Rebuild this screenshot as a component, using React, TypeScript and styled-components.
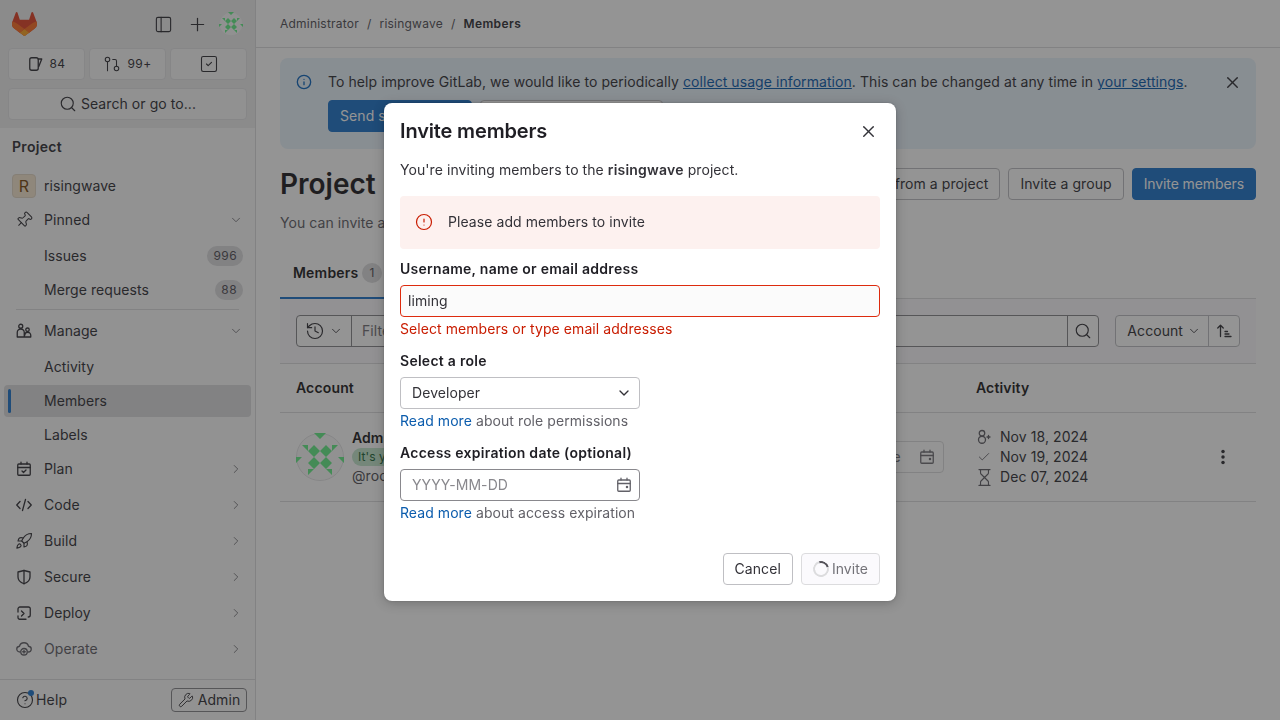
import React from 'react';
import styled, { createGlobalStyle } from 'styled-components';
import {
  Check,
  ChevronDown,
  ChevronRight,
  CircleAlert,
  CircleHelp,
  GitPullRequest,
  History,
  Hourglass,
  Info,
  PanelLeft,
  Pin,
  Plus,
  Rocket,
  Search,
  SquareCheck,
  Wrench,
  X,
} from 'lucide-react';

const GlobalStyle = createGlobalStyle`
  html, body {
    margin: 0;
    padding: 0;
    height: 100%;
    overflow: hidden;
    background: #fff;
  }
  body {
    font-family: Inter, "Noto Sans", "Liberation Sans", sans-serif;
    font-size: 14px;
    line-height: 20px;
    letter-spacing: 0.07px;
    color: #333238;
  }
  * {
    box-sizing: border-box;
  }
`;

const Page = styled.div`
  display: grid;
  grid-template-columns: 256px 1fr;
  width: 1280px;
  height: 720px;
  overflow: hidden;
`;

/* ---------- sidebar ---------- */

const Sidebar = styled.aside`
  display: flex;
  flex-direction: column;
  height: 720px;
  background: #fbfbfb;
  border-right: 1px solid #dcdcde;
`;

const SidebarTop = styled.div`
  height: 128px;
  flex-shrink: 0;
  padding: 0 8px;
  background: #eeeeee;
`;

const TopRow = styled.div`
  display: flex;
  align-items: center;
  height: 48px;
  padding-left: 4px;
  color: #333238;
`;

const TopIcons = styled.div`
  display: flex;
  align-items: center;
  margin-left: auto;
  padding-right: 4px;
`;

const TopIconButton = styled.span`
  display: flex;
  align-items: center;
  justify-content: center;
  width: 34px;
`;

const TopAvatar = styled.span`
  display: flex;
  margin-left: 5px;
`;

const CountRow = styled.div`
  display: grid;
  grid-template-columns: repeat(3, 77px);
  gap: 4px;
`;

const CountButton = styled.div`
  display: flex;
  align-items: center;
  justify-content: center;
  gap: 6px;
  height: 32px;
  font-size: 12px;
  letter-spacing: 0.4px;
  background: #f9f9f9;
  border: 1px solid #e4e4e6;
  border-radius: 4px;
`;

const SearchButton = styled.div`
  display: flex;
  align-items: center;
  justify-content: center;
  gap: 4px;
  height: 32px;
  margin-top: 8px;
  width: 239px;
  background: #f9f9f9;
  border: 1px solid #e4e4e6;
  border-radius: 4px;
`;

const SidebarHeading = styled.div`
  flex-shrink: 0;
  padding: 9px 12px 0;
  height: 42px;
  font-weight: 600;
  letter-spacing: 0.3px;
`;

const Nav = styled.nav`
  flex: 1;
  min-height: 0;
  overflow: hidden;
  padding: 0 4px;
`;

const NavRow = styled.div<{ $active?: boolean; $muted?: boolean; $gap?: number }>`
  position: relative;
  display: flex;
  align-items: center;
  height: 32px;
  margin-top: ${p => p.$gap ?? 2}px;
  padding: 0 8px 0 12px;
  border-radius: 4px;
  background: ${p => (p.$active ? '#dcdcde' : 'transparent')};
  color: ${p => (p.$muted ? '#626168' : '#333238')};

  ${p =>
    p.$active &&
    `&::before {
      content: '';
      position: absolute;
      left: 4px;
      top: 4px;
      bottom: 4px;
      width: 3px;
      border-radius: 2px;
      background: #1f75cb;
    }`}
`;

const NavIconSlot = styled.span`
  display: flex;
  align-items: center;
  justify-content: center;
  width: 16px;
  height: 16px;
  margin-right: 12px;
  flex-shrink: 0;

  svg {
    flex-shrink: 0;
  }
`;

const NavCaret = styled.span`
  display: flex;
  margin-left: auto;
  color: #737278;
`;

const NavBadge = styled.span`
  margin-left: auto;
  margin-right: 0;
  padding: 0 6px;
  height: 20px;
  line-height: 20px;
  font-size: 12px;
  letter-spacing: 0.4px;
  border-radius: 10px;
  background: #dcdcde;
  color: #535158;
`;

const ProjectAvatar = styled.span`
  display: flex;
  align-items: center;
  justify-content: center;
  width: 24px;
  height: 24px;
  margin-left: -4px;
  margin-right: 8px;
  font-size: 16px;
  color: #7a4a12;
  background: #f5e6d0;
  border: 1px solid #e3d6c5;
  border-radius: 4px;
`;

const NavDivider = styled.div`
  height: 1px;
  margin: 3px 12px 5px 12px;
  background: #dcdcde;
`;

const SidebarFooter = styled.div`
  display: flex;
  align-items: center;
  justify-content: space-between;
  flex-shrink: 0;
  height: 41px;
  padding: 0 8px 0 16px;
  border-top: 1px solid #dcdcde;
`;

const HelpLink = styled.span`
  position: relative;
  display: flex;
  align-items: center;
  gap: 2px;
  letter-spacing: 0.2px;
`;

const HelpDot = styled.span`
  position: absolute;
  left: 12px;
  top: 0;
  width: 6px;
  height: 6px;
  border-radius: 50%;
  background: #1f75cb;
`;

const AdminButton = styled.span`
  display: flex;
  align-items: center;
  justify-content: center;
  gap: 4px;
  width: 76px;
  height: 24px;
  border: 1px solid #89888d;
  border-radius: 4px;
`;

/* ---------- main ---------- */

const Main = styled.main`
  min-width: 0;
  height: 720px;
  overflow: hidden;
`;

const Breadcrumbs = styled.div`
  display: flex;
  align-items: center;
  gap: 8px;
  height: 48px;
  padding: 0 24px;
  font-size: 12px;
  letter-spacing: 0.22px;
  color: #535158;
  border-bottom: 1px solid #dcdcde;
`;

const CrumbCurrent = styled.span`
  font-weight: 600;
  letter-spacing: 0.4px;
  color: #333238;
`;

const Content = styled.div`
  padding: 10px 24px 0;
`;

const Banner = styled.div`
  display: flex;
  height: 91px;
  padding: 14px 16px;
  background: #e9f3fc;
  border-radius: 8px;
`;

const BannerIcon = styled.span`
  display: flex;
  width: 32px;
  padding-top: 2px;
  flex-shrink: 0;
  color: #1068bf;
`;

const BannerBody = styled.div`
  flex: 1;
`;

const BannerText = styled.div`
  height: 28px;
`;

const BannerClose = styled.span`
  display: flex;
  margin: 2px 0 0 auto;
  color: #333238;
`;

const CloseIcon = styled(X)`
  margin: -1.5px;
`;

const TextLink = styled.a<{ $underline?: boolean }>`
  color: #0b5cad;
  text-decoration: ${p => (p.$underline ? 'underline' : 'none')};
`;

const BannerActions = styled.div`
  display: flex;
  gap: 8px;
`;

const Button = styled.span<{ $primary?: boolean; $disabled?: boolean }>`
  display: inline-flex;
  align-items: center;
  justify-content: center;
  gap: 4px;
  height: 32px;
  padding: 0 11px;
  white-space: nowrap;
  border-radius: 4px;
  border: 1px solid ${p => (p.$primary ? '#1f75cb' : p.$disabled ? '#dcdcde' : '#bfbfc3')};
  background: ${p => (p.$primary ? '#1f75cb' : p.$disabled ? '#fbfafd' : '#fff')};
  color: ${p => (p.$primary ? '#fff' : p.$disabled ? '#737278' : '#333238')};
`;

const InviteButton = styled(Button)`
  letter-spacing: -0.1px;
`;

const TitleRow = styled.div`
  display: flex;
  align-items: center;
  justify-content: space-between;
  margin-top: 19px;
  height: 32px;
`;

const PageTitle = styled.h1`
  margin: 0;
  font-size: 28px;
  line-height: 32px;
  font-weight: 600;
  letter-spacing: 0;
  color: #1f1e24;
`;

const TitleActions = styled.div`
  display: flex;
  gap: 8px;
`;

const PageIntro = styled.p`
  margin: 13px 0 0;
  color: #626168;
`;

const Tabs = styled.div`
  display: flex;
  margin-top: 16px;
  height: 50px;
  border-bottom: 1px solid #dcdcde;
`;

const Tab = styled.div`
  display: flex;
  align-items: center;
  gap: 4px;
  height: 50px;
  padding: 0 13px;
  font-weight: 600;
  letter-spacing: 0.2px;
  color: #1f1e24;
  border-bottom: 2px solid #1f75cb;
`;

const TabCount = styled.span`
  padding: 0 7px;
  height: 20px;
  font-size: 12px;
  line-height: 20px;
  font-weight: 400;
  border-radius: 10px;
  background: #dcdcde;
  color: #535158;
`;

const FilterBar = styled.div`
  display: flex;
  align-items: center;
  height: 65px;
  padding: 0 16px;
  background: #fbfafd;
  border-bottom: 1px solid #dcdcde;
`;

const FilterGroup = styled.div`
  display: flex;
  flex: 1;
  height: 32px;
  margin-right: 16px;
  background: #fff;
  border: 1px solid #89888d;
  border-radius: 4px;
`;

const HistoryToggle = styled.span`
  display: flex;
  align-items: center;
  justify-content: center;
  gap: 4px;
  width: 55px;
  border-right: 1px solid #89888d;
`;

const FilterInput = styled.span`
  flex: 1;
  padding: 5px 10px;
  color: #737278;
`;

const FilterSubmit = styled.span`
  display: flex;
  align-items: center;
  justify-content: center;
  width: 31px;
  border-left: 1px solid #89888d;
`;

const SortGroup = styled.div`
  display: flex;
  height: 32px;
  border: 1px solid #bfbfc3;
  border-radius: 4px;
  background: #fff;
`;

const SortLabel = styled.span`
  display: flex;
  align-items: center;
  gap: 4px;
  padding: 0 7px 0 11px;
`;

const SortDirection = styled.span`
  display: flex;
  align-items: center;
  justify-content: center;
  width: 31px;
  border-left: 1px solid #bfbfc3;
`;

const TABLE_COLUMNS = '160px 180px 152px 188px 230px 1fr';

const TableHead = styled.div`
  display: grid;
  grid-template-columns: ${TABLE_COLUMNS};
  align-items: center;
  height: 49px;
  font-weight: 600;
  letter-spacing: 0.15px;
  color: #1f1e24;
  border-bottom: 1px solid #dcdcde;
`;

const HeadCell = styled.div`
  padding: 0 16px;
`;

const TableRow = styled.div`
  display: grid;
  grid-template-columns: ${TABLE_COLUMNS};
  align-items: center;
  height: 89px;
  border-bottom: 1px solid #dcdcde;
`;

const AccountCell = styled.div`
  display: flex;
  align-items: center;
  gap: 8px;
  padding-left: 16px;
  white-space: nowrap;
`;

const AccountName = styled.div`
  font-weight: 600;
  color: #1f1e24;
`;

const YouBadge = styled.span`
  display: block;
  width: max-content;
  height: 18px;
  padding: 0 6px;
  font-size: 12px;
  line-height: 18px;
  border-radius: 9px;
  background: #c3e6cd;
  color: #24663b;
`;

const AccountHandle = styled.div`
  color: #535158;
`;

const ExpirationCell = styled.div`
  padding: 0 16px;
`;

const DateStub = styled.div`
  display: flex;
  align-items: center;
  justify-content: space-between;
  height: 32px;
  padding: 0 8px 0 12px;
  color: #737278;
  border: 1px solid #dcdcde;
  border-radius: 4px;
`;

const ActivityCell = styled.div`
  padding: 0 16px;
`;

const ActivityLine = styled.div`
  display: flex;
  align-items: center;
  gap: 8px;
  height: 20px;
`;

const ActivityIcon = styled.span`
  display: flex;
  justify-content: center;
  width: 16px;
  color: #626168;

  svg {
    flex-shrink: 0;
  }
`;

const KebabCell = styled.div`
  display: flex;
  justify-content: center;
  color: #333238;
`;

/* ---------- modal ---------- */

const Backdrop = styled.div`
  position: fixed;
  inset: 0;
  display: flex;
  justify-content: center;
  align-items: flex-start;
  padding-top: 103px;
  background: rgba(31, 31, 31, 0.478);
`;

const Modal = styled.div`
  width: 512px;
  height: 498px;
  background: #fff;
  border-radius: 8px;
  box-shadow: 0 0 2px rgba(5, 5, 6, 0.2), 0 2px 12px rgba(5, 5, 6, 0.24);
`;

const ModalHeader = styled.div`
  display: flex;
  align-items: center;
  justify-content: space-between;
  height: 56px;
  padding: 0 20px 0 16px;
`;

const ModalTitle = styled.h2`
  margin: 0;
  font-size: 20px;
  line-height: 24px;
  font-weight: 600;
  letter-spacing: -0.15px;
  color: #1f1e24;
`;

const ModalBody = styled.div`
  padding: 0 16px;

  strong {
    font-weight: 600;
    letter-spacing: 0.2px;
  }
`;

const ModalIntro = styled.p`
  margin: 0;
  padding-top: 1px;
  height: 37px;
`;

const ErrorAlert = styled.div`
  display: flex;
  align-items: center;
  gap: 16px;
  height: 53px;
  margin-bottom: 10px;
  padding: 0 16px 1px;
  background: #fdf1ef;
  border-radius: 4px;
  color: #333238;
`;

const ErrorAlertIcon = styled.span`
  display: flex;
  margin: -1px;
  color: #c91c00;
`;

const FieldLabel = styled.label`
  display: block;
  height: 20px;
  margin-bottom: 6px;
  font-weight: 600;
  letter-spacing: 0.27px;
  color: #1f1e24;
`;

const TextField = styled.div<{ $invalid?: boolean; $narrow?: boolean }>`
  display: flex;
  align-items: center;
  justify-content: space-between;
  height: 32px;
  width: ${p => (p.$narrow ? '240px' : '100%')};
  padding: 0 7px;
  border-radius: 4px;
  border: 1px solid ${p => (p.$invalid ? '#dd2b0e' : '#89888d')};
  background: ${p => (p.$invalid ? '#fbfbfb' : '#fff')};
`;

const SelectField = styled(TextField)`
  padding: 0 7px 0 11px;
  border-color: #bfbfc3;
`;

const DateField = styled(TextField)`
  padding: 0 7px 0 11px;
  color: #89888d;
`;

const DateIcon = styled.span`
  display: flex;
  color: #626168;
`;

const FieldError = styled.div`
  margin: 2px 0 12px;
  color: #c91c00;
`;

const FieldHelp = styled.div`
  margin: 2px 0 12px;
  color: #626168;
`;

const ModalFooter = styled.div`
  display: flex;
  justify-content: flex-end;
  gap: 8px;
  margin-top: 30px;
  padding: 0 16px;
`;

const Spinner = styled.span`
  display: block;
  width: 16px;
  height: 16px;
  margin-right: -1px;
  border-radius: 50%;
  border: 2px solid #dcdcde;
  border-top-color: #535158;
  transform: rotate(30deg);
`;

/* ---------- drawings ---------- */

type IconProps = { size?: number; children: React.ReactNode };

const Glyph = ({ size = 16, children }: IconProps) => (
  <svg
    width={size}
    height={size}
    viewBox="0 0 16 16"
    fill="none"
    stroke="currentColor"
    strokeWidth="1.3"
    strokeLinecap="round"
    strokeLinejoin="round"
  >
    {children}
  </svg>
);

const TiltedPin = styled(Pin)`
  transform: rotate(45deg);
`;

const Tanuki = () => (
  <svg width="25" height="24" viewBox="0 0 25 24">
    <path
      fill="#E24329"
      d="m24.507 9.5-.034-.09L21.082.562a.896.896 0 0 0-1.694.091l-2.29 7.01H7.825L5.535.653a.898.898 0 0 0-1.694-.09L.451 9.411.416 9.5a6.297 6.297 0 0 0 2.09 7.278l.012.01.03.022 5.16 3.867 2.56 1.935 1.554 1.176a1.051 1.051 0 0 0 1.268 0l1.555-1.176 2.56-1.935 5.197-3.89.014-.01A6.297 6.297 0 0 0 24.507 9.5Z"
    />
    <path
      fill="#FC6D26"
      d="m24.507 9.5-.034-.09a11.44 11.44 0 0 0-4.56 2.051l-7.447 5.632 4.742 3.584 5.197-3.89.014-.01A6.297 6.297 0 0 0 24.507 9.5Z"
    />
    <path
      fill="#FCA326"
      d="m7.707 20.677 2.56 1.935 1.555 1.176a1.051 1.051 0 0 0 1.268 0l1.555-1.176 2.56-1.935-4.743-3.584-4.755 3.584Z"
    />
    <path
      fill="#FC6D26"
      d="M5.01 11.461a11.43 11.43 0 0 0-4.56-2.05L.416 9.5a6.297 6.297 0 0 0 2.09 7.278l.012.01.03.022 5.16 3.867 4.745-3.584-7.444-5.632Z"
    />
  </svg>
);

const IdenticonSvg = styled.svg`
  flex-shrink: 0;
`;

const Identicon = ({ size }: { size: number }) => (
  <IdenticonSvg width={size} height={size} viewBox="0 0 48 48">
    <circle cx="24" cy="24" r="23.5" fill="#fafafa" stroke="#e4e4e6" />
    <g fill="#66ee88">
      <path d="M18 12l6 6-6 6-6-6zM30 12l6 6-6 6-6-6zM18 24l6 6-6 6-6-6zM30 24l6 6-6 6-6-6z" />
      <path d="M18 0h12l-6 6zM6 12h6v6zM36 12h6l-6 6zM0 24h6l-6 6zM42 24h6v6zM12 36h6l-6 6zM30 36h6v6z" />
    </g>
  </IdenticonSvg>
);

const IssuesIcon = () => (
  <Glyph>
    <rect x="1.75" y="1.75" width="8.5" height="12.5" rx="2" />
    <path d="M10.25 3h3.5l-3 7.5" />
  </Glyph>
);

const ManageIcon = () => (
  <Glyph>
    <circle cx="4.75" cy="3.25" r="2" />
    <path d="M1.25 14V9.5a3.5 3.5 0 0 1 7 0V14zM8.25 14h6.5v-1.75a3 3 0 0 0-6 0" />
    <circle cx="11.5" cy="6.75" r="1.75" />
  </Glyph>
);

const PlanIcon = () => (
  <Glyph>
    <rect x="1.75" y="3" width="12.5" height="11.25" rx="1" />
    <path d="M1.75 6.5h12.5M5 1.25V3M11 1.25V3M6 10l1.5 1.5L10 9" />
  </Glyph>
);

const CodeIcon = () => (
  <Glyph>
    <path d="M4 4.5L0.75 8 4 11.5M12 4.5L15.25 8 12 11.5M9.5 2.5l-3 11" />
  </Glyph>
);

const SecureIcon = () => (
  <Glyph>
    <path d="M2 3l6-1.5L14 3v5c0 3.5-3 5.7-6 6.75C5 13.7 2 11.5 2 8z" />
    <path d="M8 1.5v13.25" />
  </Glyph>
);

const DeployIcon = () => (
  <Glyph>
    <path d="M2 7V4a2 2 0 0 1 2-2h8.5a1.75 1.75 0 0 1 1.75 1.75V10a2 2 0 0 1-2 2M2 11v1.5a1.75 1.75 0 0 0 1.75 1.75H10" />
    <path d="M5.5 6l2.5 2.5L5.5 11" />
  </Glyph>
);

const OperateIcon = () => (
  <Glyph>
    <path d="M4 11C2 11 .75 9.5.75 8S2 5.5 3.5 5.25C4 3 6 1.75 8 1.75s4 1.25 4.5 3.5C14 5.5 15.25 6.5 15.25 8s-1.25 3-3.25 3" />
    <circle cx="8" cy="10.75" r="3.25" />
    <path d="M8 9.5v2.5M6.75 10.75h2.5" />
  </Glyph>
);

const CalendarIcon = () => (
  <Glyph>
    <rect x="1.75" y="3" width="12.5" height="11.25" rx="1" />
    <path d="M1.75 6.5h12.5M5 1.25V3M11 1.25V3" />
    <circle cx="11" cy="10" r=".6" fill="currentColor" />
  </Glyph>
);

const SortIcon = () => (
  <Glyph>
    <path d="M4.5 13.5v-11M1.75 5L4.5 2.25 7.25 5M9 8.5h2.5M9 11h4M9 13.5h6" />
  </Glyph>
);

const UserPlusIcon = () => (
  <Glyph>
    <circle cx="6" cy="4.25" r="2.75" />
    <circle cx="6" cy="10.75" r="3.5" />
    <path d="M12.5 6.5v3M11 8h3" />
  </Glyph>
);

const KebabIcon = () => (
  <svg width="16" height="16" viewBox="0 0 16 16" fill="currentColor">
    <circle cx="8" cy="2.5" r="1.75" />
    <circle cx="8" cy="8" r="1.75" />
    <circle cx="8" cy="13.5" r="1.75" />
  </svg>
);

/* ---------- data ---------- */

const PINNED = [
  { label: 'Issues', count: '996' },
  { label: 'Merge requests', count: '88' },
];

const MANAGE = ['Activity', 'Members', 'Labels'];

const SECTIONS = [
  { label: 'Plan', icon: <PlanIcon />, gap: 2 },
  { label: 'Code', icon: <CodeIcon />, gap: 4 },
  { label: 'Build', icon: <Rocket size={18} strokeWidth={1.5} />, gap: 4 },
  { label: 'Secure', icon: <SecureIcon />, gap: 4 },
  { label: 'Deploy', icon: <DeployIcon />, gap: 4 },
  { label: 'Operate', icon: <OperateIcon />, gap: 4, muted: true },
];

const App = () => (
  <>
    <GlobalStyle />
    <Page>
      <Sidebar>
        <SidebarTop>
          <TopRow>
            <Tanuki />
            <TopIcons>
              <TopIconButton>
                <PanelLeft size={19} strokeWidth={1.4} />
              </TopIconButton>
              <TopIconButton>
                <Plus size={21} strokeWidth={1.4} />
              </TopIconButton>
              <TopAvatar>
                <Identicon size={24} />
              </TopAvatar>
            </TopIcons>
          </TopRow>
          <CountRow>
            <CountButton>
              <IssuesIcon />
              84
            </CountButton>
            <CountButton>
              <GitPullRequest size={18} strokeWidth={1.4} />
              99+
            </CountButton>
            <CountButton>
              <SquareCheck size={20} strokeWidth={1.3} />
            </CountButton>
          </CountRow>
          <SearchButton>
            <Search size={18} strokeWidth={1.5} />
            Search or go to...
          </SearchButton>
        </SidebarTop>
        <SidebarHeading>Project</SidebarHeading>
        <Nav>
          <NavRow $gap={0}>
            <ProjectAvatar>R</ProjectAvatar>
            risingwave
          </NavRow>
          <NavRow>
            <NavIconSlot>
              <TiltedPin size={18} strokeWidth={1.4} />
            </NavIconSlot>
            Pinned
            <NavCaret>
              <ChevronDown size={14} strokeWidth={1.5} />
            </NavCaret>
          </NavRow>
          {PINNED.map((item, i) => (
            <NavRow key={item.label} $gap={i === 0 ? 4 : 2}>
              <NavIconSlot />
              {item.label}
              <NavBadge>{item.count}</NavBadge>
            </NavRow>
          ))}
          <NavDivider />
          <NavRow $gap={0}>
            <NavIconSlot>
              <ManageIcon />
            </NavIconSlot>
            Manage
            <NavCaret>
              <ChevronDown size={14} strokeWidth={1.5} />
            </NavCaret>
          </NavRow>
          {MANAGE.map((label, i) => (
            <NavRow key={label} $gap={i === 0 ? 4 : 2} $active={label === 'Members'}>
              <NavIconSlot />
              {label}
            </NavRow>
          ))}
          {SECTIONS.map(section => (
            <NavRow key={section.label} $gap={section.gap} $muted={section.muted}>
              <NavIconSlot>{section.icon}</NavIconSlot>
              {section.label}
              <NavCaret>
                <ChevronRight size={14} strokeWidth={1.5} />
              </NavCaret>
            </NavRow>
          ))}
        </Nav>
        <SidebarFooter>
          <HelpLink>
            <CircleHelp size={18} strokeWidth={1.5} />
            <HelpDot />
            Help
          </HelpLink>
          <AdminButton>
            <Wrench size={16} strokeWidth={1.4} />
            Admin
          </AdminButton>
        </SidebarFooter>
      </Sidebar>

      <Main>
        <Breadcrumbs>
          <span>Administrator</span>
          <span>/</span>
          <span>risingwave</span>
          <span>/</span>
          <CrumbCurrent>Members</CrumbCurrent>
        </Breadcrumbs>
        <Content>
          <Banner>
            <BannerIcon>
              <Info size={16} strokeWidth={2} />
            </BannerIcon>
            <BannerBody>
              <BannerText>
                To help improve GitLab, we would like to periodically{' '}
                <TextLink $underline>collect usage information</TextLink>. This can be changed at any time in{' '}
                <TextLink $underline>your settings</TextLink>.
              </BannerText>
              <BannerActions>
                <Button $primary>Send service data</Button>
                <Button>Don't send service data</Button>
              </BannerActions>
            </BannerBody>
            <BannerClose>
              <CloseIcon size={19} strokeWidth={1.8} />
            </BannerClose>
          </Banner>
          <TitleRow>
            <PageTitle>Project members</PageTitle>
            <TitleActions>
              <Button>Import from a project</Button>
              <Button>Invite a group</Button>
              <InviteButton $primary>Invite members</InviteButton>
            </TitleActions>
          </TitleRow>
          <PageIntro>You can invite a new member to risingwave or invite another group.</PageIntro>
          <Tabs>
            <Tab>
              Members <TabCount>1</TabCount>
            </Tab>
          </Tabs>
          <FilterBar>
            <FilterGroup>
              <HistoryToggle>
                <History size={20} strokeWidth={1.4} />
                <ChevronDown size={14} strokeWidth={1.5} />
              </HistoryToggle>
              <FilterInput>Filter members</FilterInput>
              <FilterSubmit>
                <Search size={18} strokeWidth={1.5} />
              </FilterSubmit>
            </FilterGroup>
            <SortGroup>
              <SortLabel>
                Account
                <ChevronDown size={14} strokeWidth={1.5} />
              </SortLabel>
              <SortDirection>
                <SortIcon />
              </SortDirection>
            </SortGroup>
          </FilterBar>
          <TableHead>
            <HeadCell>Account</HeadCell>
            <HeadCell>Source</HeadCell>
            <HeadCell>Role</HeadCell>
            <HeadCell>Expiration</HeadCell>
            <HeadCell>Activity</HeadCell>
          </TableHead>
          <TableRow>
            <AccountCell>
              <Identicon size={48} />
              <div>
                <AccountName>Administrator</AccountName>
                <YouBadge>It's you</YouBadge>
                <AccountHandle>@root</AccountHandle>
              </div>
            </AccountCell>
            <div />
            <div />
            <ExpirationCell>
              <DateStub>
                Expiration date
                <CalendarIcon />
              </DateStub>
            </ExpirationCell>
            <ActivityCell>
              <ActivityLine>
                <ActivityIcon>
                  <UserPlusIcon />
                </ActivityIcon>
                Nov 18, 2024
              </ActivityLine>
              <ActivityLine>
                <ActivityIcon>
                  <Check size={14} strokeWidth={1.5} />
                </ActivityIcon>
                Nov 19, 2024
              </ActivityLine>
              <ActivityLine>
                <ActivityIcon>
                  <Hourglass size={19} strokeWidth={1.4} />
                </ActivityIcon>
                Dec 07, 2024
              </ActivityLine>
            </ActivityCell>
            <KebabCell>
              <KebabIcon />
            </KebabCell>
          </TableRow>
        </Content>
      </Main>
    </Page>

    <Backdrop>
      <Modal>
        <ModalHeader>
          <ModalTitle>Invite members</ModalTitle>
          <CloseIcon size={19} strokeWidth={1.8} />
        </ModalHeader>
        <ModalBody>
          <ModalIntro>
            You're inviting members to the <strong>risingwave</strong> project.
          </ModalIntro>
          <ErrorAlert>
            <ErrorAlertIcon>
              <CircleAlert size={18} strokeWidth={1.6} />
            </ErrorAlertIcon>
            Please add members to invite
          </ErrorAlert>
          <FieldLabel>Username, name or email address</FieldLabel>
          <TextField $invalid>liming</TextField>
          <FieldError>Select members or type email addresses</FieldError>
          <FieldLabel>Select a role</FieldLabel>
          <SelectField $narrow>
            Developer
            <ChevronDown size={16} strokeWidth={2} />
          </SelectField>
          <FieldHelp>
            <TextLink>Read more</TextLink> about role permissions
          </FieldHelp>
          <FieldLabel>Access expiration date (optional)</FieldLabel>
          <DateField $narrow>
            YYYY-MM-DD
            <DateIcon>
              <CalendarIcon />
            </DateIcon>
          </DateField>
          <FieldHelp>
            <TextLink>Read more</TextLink> about access expiration
          </FieldHelp>
        </ModalBody>
        <ModalFooter>
          <Button>Cancel</Button>
          <Button $disabled>
            <Spinner />
            Invite
          </Button>
        </ModalFooter>
      </Modal>
    </Backdrop>
  </>
);

export default App;
